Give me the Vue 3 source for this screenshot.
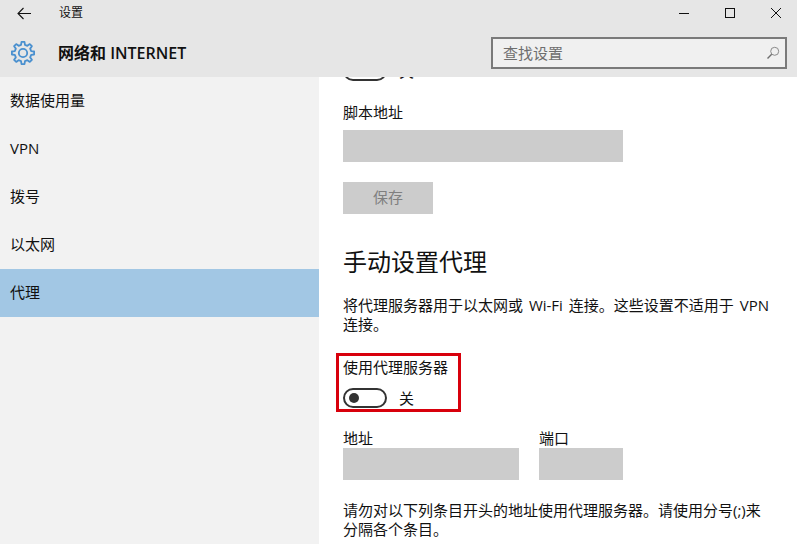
<script setup>
const navItems = [
  { label: '数据使用量' },
  { label: 'VPN' },
  { label: '拨号' },
  { label: '以太网' },
  { label: '代理', active: true }
]

// Eight-toothed gear outline centred on (13, 13)
const gearPath = (() => {
  const teeth = 8
  const outer = 11.2
  const inner = 8.4
  const pts = []
  for (let i = 0; i < teeth; i++) {
    const a = (i * 2 * Math.PI) / teeth
    const step = (2 * Math.PI) / teeth
    const add = (r, t) => pts.push(`${(13 + r * Math.sin(t)).toFixed(2)} ${(13 - r * Math.cos(t)).toFixed(2)}`)
    add(inner, a - step * 0.3)
    add(outer, a - step * 0.17)
    add(outer, a + step * 0.17)
    add(inner, a + step * 0.3)
  }
  return `M${pts.join('L')}Z`
})()
</script>

<template>
  <div class="window">
    <header class="header">
      <div class="titlebar">
        <svg class="back" width="14" height="13" viewBox="0 0 14 13">
          <path d="M6.500 1 1 6.500 6.500 12M1 6.500H14" fill="none" stroke="#111" stroke-width="1.100" />
        </svg>
        <span class="title">设置</span>
        <div class="controls">
          <svg width="12" height="12" viewBox="0 0 12 12"><path d="M1 6.500H11" stroke="#111" stroke-width="1" /></svg>
          <svg width="12" height="12" viewBox="0 0 12 12"><rect x="1.500" y="1.500" width="9" height="9" fill="none" stroke="#111" stroke-width="1" /></svg>
          <svg width="12" height="12" viewBox="0 0 12 12"><path d="M1 1 11 11M11 1 1 11" stroke="#111" stroke-width="1" /></svg>
        </div>
      </div>
      <div class="subbar">
        <svg class="gear" width="26" height="26" viewBox="0 0 26 26">
          <path :d="gearPath" fill="none" stroke="#4a90cf" stroke-width="1.800" stroke-linejoin="round" />
          <circle cx="13" cy="13" r="4.200" fill="none" stroke="#4a90cf" stroke-width="1.800" />
        </svg>
        <span class="section">网络和 INTERNET</span>
        <div class="search">
          <span class="search-text">查找设置</span>
          <svg width="14" height="14" viewBox="0 0 14 14">
            <circle cx="8.700" cy="5.300" r="4" fill="none" stroke="#8a8a8a" stroke-width="1" />
            <path d="M5.700 8.300 1.500 12.500" stroke="#6f6f6f" stroke-width="1.400" />
          </svg>
        </div>
      </div>
    </header>
    <div class="body">
      <nav class="sidebar">
        <div v-for="item in navItems" :key="item.label" class="nav-item" :class="{ active: item.active }">{{ item.label }}</div>
      </nav>
      <main class="content">
        <div class="toggle-row peek">
          <span class="toggle"><span class="knob"></span></span>
          <span class="toggle-label">关</span>
        </div>
        <div class="label script-label">脚本地址</div>
        <div class="input script-input"></div>
        <div class="save">保存</div>
        <h2 class="heading">手动设置代理</h2>
        <p class="para">将代理服务器用于以太网或 Wi-Fi 连接。这些设置不适用于 VPN 连接。</p>
        <div class="highlight">
          <div class="label">使用代理服务器</div>
          <div class="toggle-row">
            <span class="toggle"><span class="knob"></span></span>
            <span class="toggle-label">关</span>
          </div>
        </div>
        <div class="fields">
          <div class="field">
            <div class="label">地址</div>
            <div class="input addr"></div>
          </div>
          <div class="field">
            <div class="label">端口</div>
            <div class="input port"></div>
          </div>
        </div>
        <p class="para exclude">请勿对以下列条目开头的地址使用代理服务器。请使用分号(;)来分隔各个条目。</p>
      </main>
    </div>
  </div>
</template>

<style>
html, body { margin: 0; padding: 0; background: #fff; }
</style>

<style scoped>
.window {
  width: 797px;
  height: 544px;
  overflow: hidden;
  display: flex;
  flex-direction: column;
  font-family: "Open Sans", "Noto Sans CJK SC", sans-serif;
  font-size: 15px;
  color: #111;
  background: #fff;
}
.header {
  height: 77px;
  flex: none;
  background: #e6e6e6;
  position: relative;
  z-index: 1;
}
.titlebar {
  height: 26px;
  display: flex;
  align-items: center;
  padding-left: 17px;
}
.back { margin-right: 28px; }
.title { font-size: 12px; padding-bottom: 2px; }
.controls {
  margin-left: auto;
  margin-right: 15px;
  display: flex;
  gap: 34px;
}
.subbar {
  height: 51px;
  display: flex;
  align-items: center;
  padding: 3px 10px 0 10px;
  box-sizing: border-box;
}
.gear { margin-right: 22px; }
.section { font-size: 16px; font-weight: 600; padding-bottom: 2px; }
.search {
  margin-left: auto;
  width: 296px;
  height: 32px;
  box-sizing: border-box;
  border: 2px solid #7a7a7a;
  background: #f0f0f0;
  display: flex;
  align-items: center;
  justify-content: space-between;
  padding: 0 5px 0 10px;
}
.search-text { color: #6e6e6e; padding-bottom: 2px; }
.body {
  flex: 1;
  display: flex;
  min-height: 0;
}
.sidebar {
  width: 319px;
  flex: none;
  background: #f2f2f2;
}
.nav-item {
  height: 48px;
  line-height: 46px;
  padding-left: 10px;
}
.nav-item.active { background: #a2c7e4; }
.content {
  flex: 1;
  padding: 0 24px;
  min-width: 0;
}
.peek { margin-top: -16px; height: 20px; }
.toggle-row {
  display: flex;
  align-items: center;
  gap: 12px;
}
.toggle {
  width: 44px;
  height: 20px;
  box-sizing: border-box;
  border: 2px solid #333;
  border-radius: 10px;
  display: flex;
  align-items: center;
  padding-left: 4px;
}
.knob {
  width: 10px;
  height: 10px;
  border-radius: 50%;
  background: #333;
}
.toggle-label { line-height: 20px; }
.label { line-height: 20px; }
.script-label { margin-top: 21px; }
.input { height: 32px; background: #cccccc; }
.script-input { width: 280px; margin-top: 8px; }
.save {
  width: 90px;
  height: 32px;
  margin-top: 20px;
  background: #cccccc;
  color: #7f7f7f;
  text-align: center;
  line-height: 30px;
}
.heading {
  margin: 31px 0 0;
  font-size: 24px;
  font-weight: 400;
  line-height: 34px;
}
.para {
  margin: 17px 0 0;
  line-height: 19px;
  word-spacing: 2px;
}
.highlight {
  width: 111px;
  height: 50px;
  margin: 19px 0 0 -7px;
  padding: 1px 4px 2px;
  border: 3px solid #d8000c;
}
.highlight .label { height: 20px; margin-bottom: 11px; }
.fields {
  display: flex;
  gap: 20px;
  margin-top: 16px;
}
.field .label { height: 20px; }
.addr { width: 176px; }
.port { width: 84px; }
.exclude { margin-top: 21px; }
</style>
